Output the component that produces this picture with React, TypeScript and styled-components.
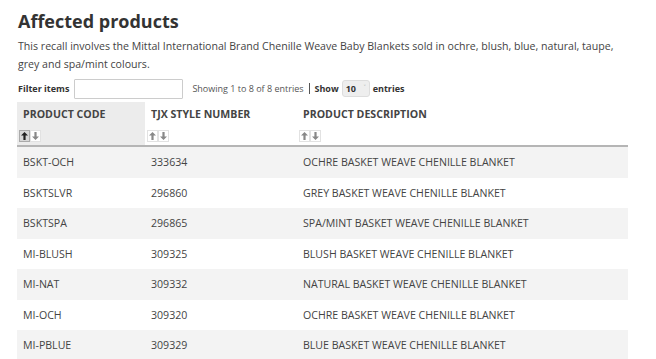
import React, { useState } from 'react';
import styled, { createGlobalStyle } from 'styled-components';

const products = [
  { code: 'BSKT-OCH', style: '333634', desc: 'OCHRE BASKET WEAVE CHENILLE BLANKET' },
  { code: 'BSKTSLVR', style: '296860', desc: 'GREY BASKET WEAVE CHENILLE BLANKET' },
  { code: 'BSKTSPA', style: '296865', desc: 'SPA/MINT BASKET WEAVE CHENILLE BLANKET' },
  { code: 'MI-BLUSH', style: '309325', desc: 'BLUSH BASKET WEAVE CHENILLE BLANKET' },
  { code: 'MI-NAT', style: '309332', desc: 'NATURAL BASKET WEAVE CHENILLE BLANKET' },
  { code: 'MI-OCH', style: '309320', desc: 'OCHRE BASKET WEAVE CHENILLE BLANKET' },
  { code: 'MI-PBLUE', style: '309329', desc: 'BLUE BASKET WEAVE CHENILLE BLANKET' },
];

const columns = ['PRODUCT CODE', 'TJX STYLE NUMBER', 'PRODUCT DESCRIPTION'];

function Arrow({ down, active }: { down?: boolean; active?: boolean }) {
  return (
    <SortBtn $active={active}>
      <svg width="7" height="8" viewBox="0 0 7 8" style={{ transform: down ? 'rotate(180deg)' : undefined }}>
        <path d="M3.5 0 L7 3.6 L4.6 3.6 L4.6 8 L2.4 8 L2.4 3.6 L0 3.6 Z" fill="currentColor" />
      </svg>
    </SortBtn>
  );
}

export default function App() {
  const [filter, setFilter] = useState('');
  const rows = products.filter((p) =>
    (p.code + p.style + p.desc).toLowerCase().includes(filter.toLowerCase())
  );

  return (
    <Page>
      <GlobalStyle />
      <Title>Affected products</Title>
      <Intro>
        This recall involves the Mittal International Brand Chenille Weave Baby Blankets sold in ochre, blush, blue, natural, taupe,
        grey and spa/mint colours.
      </Intro>
      <Controls>
        <Label>Filter items</Label>
        <FilterInput value={filter} onChange={(e) => setFilter(e.target.value)} />
        <Info>Showing 1 to 8 of 8 entries</Info>
        <Divider />
        <Label>Show</Label>
        <SelectWrap>
          <Select defaultValue="10">
            <option value="10">10</option>
            <option value="25">25</option>
          </Select>
          <Chevron>˅</Chevron>
        </SelectWrap>
        <Label>entries</Label>
      </Controls>
      <Table>
        <colgroup>
          <col style={{ width: 128 }} />
          <col style={{ width: 152 }} />
          <col />
        </colgroup>
        <thead>
          <tr>
            {columns.map((c, i) => (
              <Th key={c} $sorted={i === 0}>
                <HeadText>{c}</HeadText>
                <SortGroup>
                  <Arrow active={i === 0} />
                  <Arrow down />
                </SortGroup>
              </Th>
            ))}
          </tr>
        </thead>
        <tbody>
          {rows.map((p) => (
            <Row key={p.code}>
              <Td>{p.code}</Td>
              <Td>{p.style}</Td>
              <Td>{p.desc}</Td>
            </Row>
          ))}
        </tbody>
      </Table>
    </Page>
  );
}

// Styled components

const GlobalStyle = createGlobalStyle`
  body {
    margin: 0;
    background: #fff;
    font-family: 'Open Sans', 'Noto Sans', sans-serif;
    color: #444;
  }
`;

const Page = styled.div`
  padding: 7px 28px 0 17px;
`;

const Title = styled.h1`
  margin: 0 0 0 1px;
  font-size: 18px;
  line-height: 28px;
  font-weight: 700;
  color: #333;
`;

const Intro = styled.p`
  margin: 2px 0 0 1px;
  font-size: 10.6px;
  line-height: 18px;
  color: #444;
`;

const Controls = styled.div`
  display: flex;
  align-items: center;
  margin: 5px 0 3px 1px;
  height: 21px;
  font-size: 9px;
`;

const Label = styled.span`
  font-weight: 700;
  color: #333;
  margin-right: 3px;
`;

const FilterInput = styled.input`
  width: 109px;
  height: 20px;
  box-sizing: border-box;
  border: 1px solid #ccc;
  border-radius: 1px;
  margin: 0 9px 0 2px;
  padding: 0 4px;
  font-size: 10px;
`;

const Info = styled.span`
  color: #555;
`;

const Divider = styled.span`
  width: 1px;
  height: 11px;
  background: #555;
  margin: 0 5px;
`;

const SelectWrap = styled.span`
  position: relative;
  display: inline-flex;
  margin-right: 3px;
`;

const Select = styled.select`
  appearance: none;
  height: 17px;
  width: 28px;
  border: 1px solid #ddd;
  border-radius: 3px;
  background: #eee;
  font-family: inherit;
  font-size: 9px;
  font-weight: 700;
  color: #333;
  padding: 0 3px;
`;

const Chevron = styled.span`
  position: absolute;
  right: 4px;
  top: 3px;
  font-size: 7px;
  color: #999;
  pointer-events: none;
`;

const Table = styled.table`
  width: 611px;
  table-layout: fixed;
  border-collapse: collapse;
`;

const Th = styled.th<{ $sorted?: boolean }>`
  text-align: left;
  vertical-align: top;
  padding: 5px 5px 3px 6px;
  background: ${(p) => (p.$sorted ? '#ececec' : 'transparent')};
  border-bottom: 2px solid #b5b5b5;
`;

const HeadText = styled.div`
  font-size: 10.6px;
  font-weight: 700;
  color: #444;
  line-height: 14px;
  height: 23px;
  white-space: nowrap;
`;

const SortGroup = styled.div`
  display: flex;
  margin-left: -4px;
`;

const SortBtn = styled.span<{ $active?: boolean }>`
  display: inline-flex;
  align-items: center;
  justify-content: center;
  width: 9px;
  height: 10px;
  border: 1px solid ${(p) => (p.$active ? '#aaa' : '#e2e2e2')};
  background: ${(p) => (p.$active ? '#d8d8d8' : '#fff')};
  color: ${(p) => (p.$active ? '#222' : '#888')};
`;

const Row = styled.tr`
  &:nth-child(odd) {
    background: #f3f3f3;
  }
`;

const Td = styled.td`
  padding: 0 6px;
  height: 30.5px;
  color: #444;
  font-size: 10.6px;
  white-space: nowrap;
`;
